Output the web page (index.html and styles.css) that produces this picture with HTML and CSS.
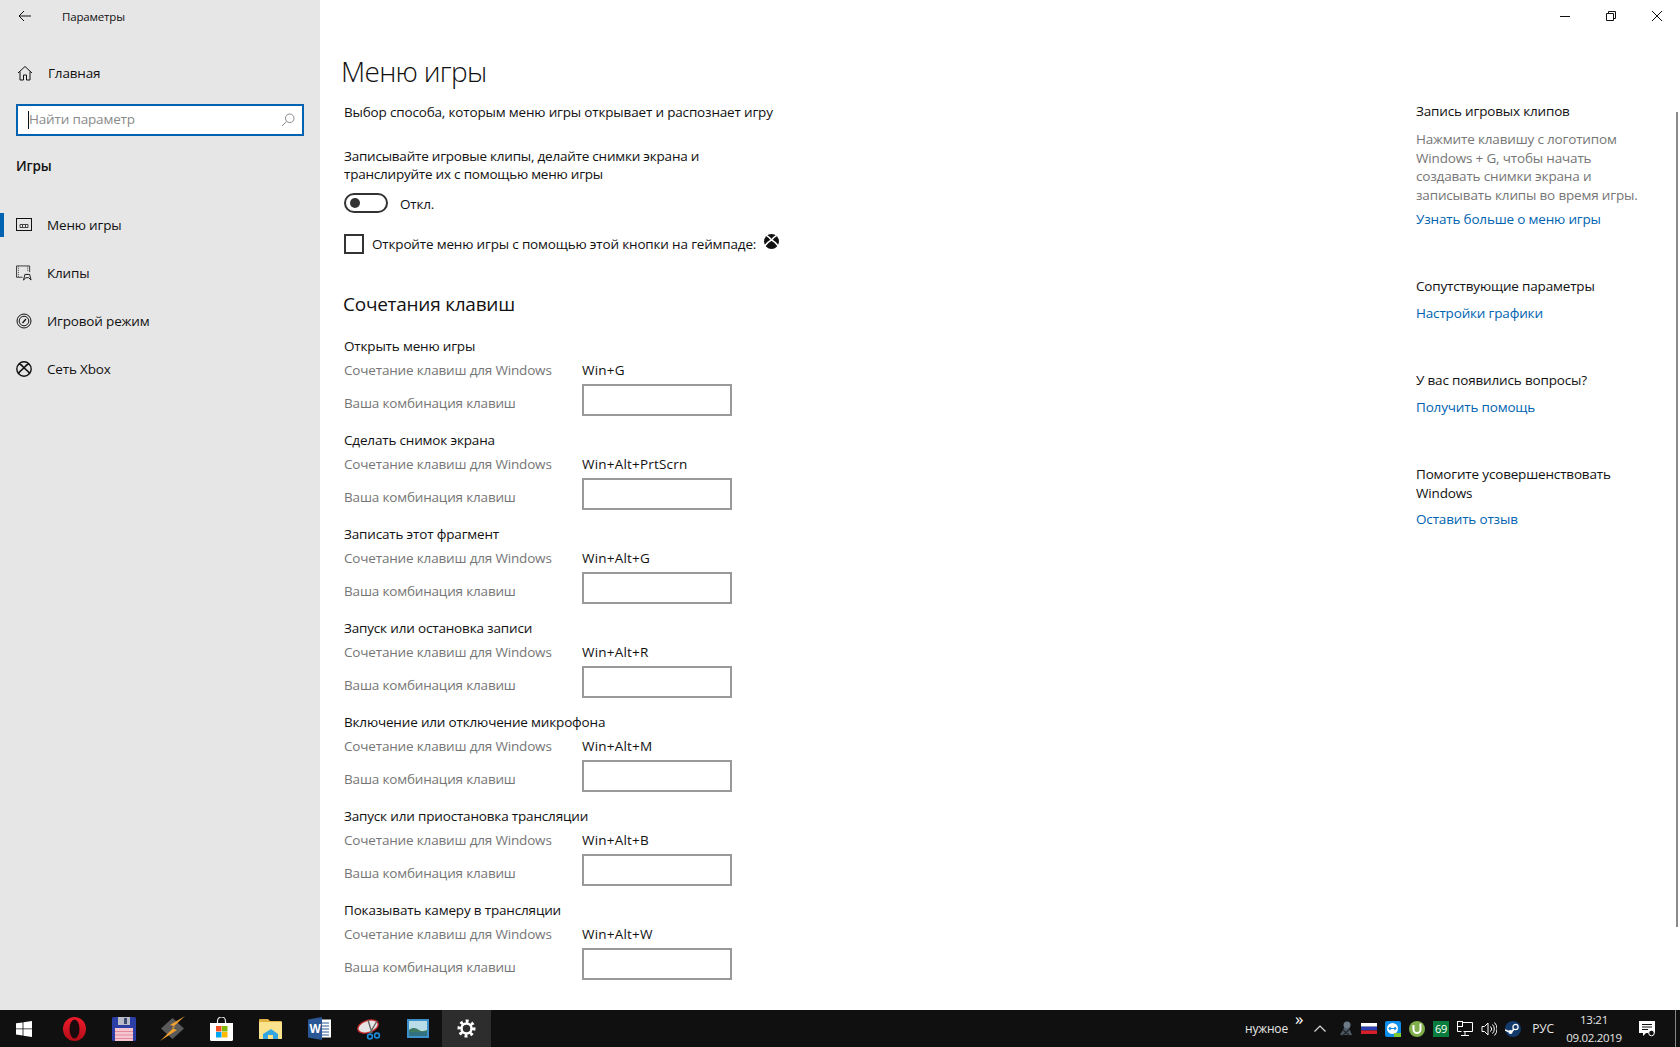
FILE: index.html
```html
<!DOCTYPE html>
<html lang="ru">
<head>
<meta charset="utf-8">
<title>Параметры</title>
<link rel="stylesheet" href="styles.css">
</head>
<body>
<div class="window">
  <aside class="sidebar">
    <div class="titlebar">
      <svg class="back" width="14" height="12" viewBox="0 0 14 12"><path d="M13 6H1M6 1 1 6l5 5" fill="none" stroke="#111" stroke-width="1"/></svg>
      <span class="apptitle">Параметры</span>
    </div>
    <div class="home">
      <svg width="16" height="16" viewBox="0 0 16 16"><path d="M1 8 8 1.500 15 8M3 6.500V15h3.500v-5h3v5H13V6.500" fill="none" stroke="#111" stroke-width="1"/></svg>
      <span>Главная</span>
    </div>
    <div class="search">
      <span class="caret"></span><span class="placeholder">Найти параметр</span>
      <svg width="14" height="14" viewBox="0 0 14 14"><circle cx="8.700" cy="5.300" r="4.300" fill="none" stroke="#8a8a8a"/><path d="M5.600 8.400 1 13" stroke="#8a8a8a" fill="none"/></svg>
    </div>
    <div class="section">Игры</div>
    <nav class="nav">
      <div class="navitem active">
        <svg width="16" height="14" viewBox="0 0 16 14"><rect x=".5" y=".5" width="15" height="12" fill="none" stroke="#111"/><path d="M4 6.500h8v3H4z" fill="none" stroke="#444"/><path d="M6.500 7v2M9.500 7v2" stroke="#444"/></svg>
        <span>Меню игры</span>
      </div>
      <div class="navitem">
        <svg width="17" height="16" viewBox="0 0 17 16"><path d="M7 12.500H.5V.5h14V7" fill="none" stroke="#333"/><path d="M2.500 1v11M12.500 1v6" stroke="#333" stroke-dasharray="1 1"/><path d="M8 15.500l1.500-6h5l1.500 6-2.500-2.500h-3z" fill="none" stroke="#111"/></svg>
        <span>Клипы</span>
      </div>
      <div class="navitem">
        <svg width="16" height="16" viewBox="0 0 16 16"><circle cx="8" cy="8" r="7" fill="none" stroke="#111"/><circle cx="8" cy="8" r="4.800" fill="none" stroke="#111"/><path d="M6.500 10 10 6" stroke="#111" stroke-width="1.300"/></svg>
        <span>Игровой режим</span>
      </div>
      <div class="navitem">
        <svg width="16" height="16" viewBox="0 0 16 16"><circle cx="8" cy="8" r="7.200" fill="none" stroke="#111" stroke-width="1.400"/><path d="M2.800 2.500C5 3.500 7 5.500 8 6.800 9 5.500 11 3.500 13.200 2.500M2.200 12.800C3.600 10.200 6.300 8.200 8 6.800c1.700 1.400 4.400 3.400 5.800 6" fill="none" stroke="#111" stroke-width="1.500"/></svg>
        <span>Сеть Xbox</span>
      </div>
    </nav>
  </aside>

  <main class="main">
    <div class="controls">
      <svg width="10" height="10" viewBox="0 0 10 10"><path d="M0 5.500h10" stroke="#111"/></svg>
      <svg width="10" height="10" viewBox="0 0 10 10"><path d="M.5 2.500h7v7h-7zM2.500 2.500V.5h7v7h-2" fill="none" stroke="#111"/></svg>
      <svg width="10" height="10" viewBox="0 0 10 10"><path d="M0 0l10 10M10 0 0 10" stroke="#111" fill="none"/></svg>
    </div>
    <div class="scrollthumb"></div>
    <div class="page">
      <section class="content">
        <h1 class="title">Меню игры</h1>
        <p class="desc">Выбор способа, которым меню игры открывает и распознает игру</p>
        <p class="para">Записывайте игровые клипы, делайте снимки экрана и<br>транслируйте их с помощью меню игры</p>
        <div class="toggle-row"><span class="toggle"><span class="knob"></span></span><span class="toggle-text">Откл.</span></div>
        <div class="check-row">
          <span class="checkbox"></span>
          <span>Откройте меню игры с помощью этой кнопки на геймпаде:</span>
          <svg class="xbox" width="15" height="15" viewBox="0 0 16 16"><circle cx="8" cy="8" r="8" fill="#111"/><path d="M2.500 1.500C5 3 7 5 8 6.300 9 5 11 3 13.500 1.500M1 12.500C3 9.500 6 7.500 8 6.300c2 1.200 5 3.200 7 6.200" fill="none" stroke="#fff" stroke-width="1.700"/></svg>
        </div>
        <h2 class="subtitle">Сочетания клавиш</h2>

        <div class="group">
          <div class="gtitle">Открыть меню игры</div>
          <div class="row"><span class="muted">Сочетание клавиш для Windows</span><span class="keyval">Win+G</span></div>
          <div class="row"><span class="muted label">Ваша комбинация клавиш</span><span class="keybox"></span></div>
        </div>
        <div class="group">
          <div class="gtitle">Сделать снимок экрана</div>
          <div class="row"><span class="muted">Сочетание клавиш для Windows</span><span class="keyval">Win+Alt+PrtScrn</span></div>
          <div class="row"><span class="muted label">Ваша комбинация клавиш</span><span class="keybox"></span></div>
        </div>
        <div class="group">
          <div class="gtitle">Записать этот фрагмент</div>
          <div class="row"><span class="muted">Сочетание клавиш для Windows</span><span class="keyval">Win+Alt+G</span></div>
          <div class="row"><span class="muted label">Ваша комбинация клавиш</span><span class="keybox"></span></div>
        </div>
        <div class="group">
          <div class="gtitle">Запуск или остановка записи</div>
          <div class="row"><span class="muted">Сочетание клавиш для Windows</span><span class="keyval">Win+Alt+R</span></div>
          <div class="row"><span class="muted label">Ваша комбинация клавиш</span><span class="keybox"></span></div>
        </div>
        <div class="group">
          <div class="gtitle">Включение или отключение микрофона</div>
          <div class="row"><span class="muted">Сочетание клавиш для Windows</span><span class="keyval">Win+Alt+M</span></div>
          <div class="row"><span class="muted label">Ваша комбинация клавиш</span><span class="keybox"></span></div>
        </div>
        <div class="group">
          <div class="gtitle">Запуск или приостановка трансляции</div>
          <div class="row"><span class="muted">Сочетание клавиш для Windows</span><span class="keyval">Win+Alt+B</span></div>
          <div class="row"><span class="muted label">Ваша комбинация клавиш</span><span class="keybox"></span></div>
        </div>
        <div class="group">
          <div class="gtitle">Показывать камеру в трансляции</div>
          <div class="row"><span class="muted">Сочетание клавиш для Windows</span><span class="keyval">Win+Alt+W</span></div>
          <div class="row"><span class="muted label">Ваша комбинация клавиш</span><span class="keybox"></span></div>
        </div>
      </section>

      <aside class="related">
        <div class="block">
          <div>Запись игровых клипов</div>
          <div class="muted note">Нажмите клавишу с логотипом<br>Windows + G, чтобы начать<br>создавать снимки экрана и<br>записывать клипы во время игры.</div>
          <a class="link after-note">Узнать больше о меню игры</a>
        </div>
        <div class="block">
          <div>Сопутствующие параметры</div>
          <a class="link">Настройки графики</a>
        </div>
        <div class="block">
          <div>У вас появились вопросы?</div>
          <a class="link">Получить помощь</a>
        </div>
        <div class="block">
          <div>Помогите усовершенствовать<br>Windows</div>
          <a class="link">Оставить отзыв</a>
        </div>
      </aside>
    </div>
  </main>
</div>

<footer class="taskbar">
  <div class="tb start">
    <svg width="16" height="16" viewBox="0 0 16 16"><path d="M0 2.300 6.600 1.400V7.500H0zM7.400 1.300 16 0V7.500H7.400zM0 8.300H6.600V14.500L0 13.600zM7.400 8.300H16V16L7.400 14.700z" fill="#fff"/></svg>
  </div>
  <div class="tb">
    <svg width="23" height="24" viewBox="0 0 23 24"><defs><linearGradient id="op" x1="0" y1="0" x2="0" y2="1"><stop offset="0" stop-color="#f01b2a"/><stop offset="1" stop-color="#b30d18"/></linearGradient></defs><ellipse cx="11.500" cy="12" rx="11.500" ry="12" fill="url(#op)"/><ellipse cx="11.500" cy="12" rx="5" ry="9.500" fill="#1a0c0e"/></svg>
  </div>
  <div class="tb">
    <svg width="24" height="24" viewBox="0 0 24 24"><rect width="24" height="24" rx="1.500" fill="#2b3fa6"/><rect x="6" y="0" width="12" height="8" fill="#b9bcc8"/><rect x="12" y="1" width="3" height="6" fill="#3c4a70"/><rect x="3" y="11" width="18" height="13" fill="#f5c6cf"/><path d="M3 14.500h18M3 18h18M3 21.500h18" stroke="#e58a9c"/></svg>
  </div>
  <div class="tb">
    <svg width="25" height="25" viewBox="0 0 25 25"><path d="M12.500 2 24 12.500 12.500 23 1 12.500z" fill="#5a5a5a"/><path d="M25 0 10 9l5 1.500L0 25l17-11-5-2z" fill="#f0a030"/></svg>
  </div>
  <div class="tb">
    <svg width="23" height="24" viewBox="0 0 23 24"><path d="M7.500 6V4a4 4 0 0 1 8 0v2" fill="none" stroke="#eee" stroke-width="1.200"/><path d="M0 6h23v16.500a1.500 1.500 0 0 1-1.500 1.500h-20A1.500 1.500 0 0 1 0 22.500z" fill="#fff"/><rect x="6" y="9" width="5.500" height="5.500" fill="#f25022"/><rect x="12" y="9" width="5.500" height="5.500" fill="#7fba00"/><rect x="6" y="15" width="5.500" height="5.500" fill="#00a4ef"/><rect x="12" y="15" width="5.500" height="5.500" fill="#ffb900"/></svg>
  </div>
  <div class="tb">
    <svg width="23" height="20" viewBox="0 0 23 20"><path d="M0 1a1 1 0 0 1 1-1h8l2 2h11a1 1 0 0 1 1 1v16a1 1 0 0 1-1 1H1a1 1 0 0 1-1-1z" fill="#e0b040"/><rect x="0" y="3" width="23" height="17" rx="1" fill="#fbe38e"/><path d="M4 20v-5l8-5 7 5v5z" fill="#35a5e0"/><rect x="9" y="16" width="5" height="4" fill="#fbe38e"/></svg>
  </div>
  <div class="tb">
    <svg width="23" height="23" viewBox="0 0 23 23"><rect x="9" y="2.500" width="14" height="18" fill="#fff"/><path d="M14 6h7M14 9h7M14 12h7M14 15h7M14 18h7" stroke="#2b5797"/><path d="M0 2.500 14 0v23L0 20.500z" fill="#2b5797"/><text x="7" y="15.500" class="wordw">W</text></svg>
  </div>
  <div class="tb">
    <svg width="24" height="24" viewBox="0 0 24 24"><ellipse cx="11" cy="9.500" rx="10.500" ry="6" fill="#e4e4e4" stroke="#c8282a" stroke-width="1.400" transform="rotate(-18 11 9.500)"/><path d="M11 3l4 13M20 4 13 16" stroke="#666" stroke-width="1.400"/><circle cx="13" cy="19.500" r="2.400" fill="none" stroke="#1c8ad8" stroke-width="1.600"/><circle cx="20" cy="18.500" r="2.400" fill="none" stroke="#1c8ad8" stroke-width="1.600"/></svg>
  </div>
  <div class="tb">
    <svg width="22" height="19" viewBox="0 0 22 19"><rect width="22" height="19" fill="#3d8fc9"/><rect x="2" y="2" width="18" height="15" fill="#b8dce8"/><path d="M2 17v-6c4-3 7-2 10 0s5 1 8 0v6z" fill="#3f7a64"/><path d="M2 13h18v4H2z" fill="#2d6d8a" opacity=".7"/></svg>
  </div>
  <div class="tb current">
    <svg width="19" height="19" viewBox="0 0 19 19"><circle cx="9.500" cy="9.500" r="7" fill="none" stroke="#fff" stroke-width="4" stroke-dasharray="2.700 2.800" transform="rotate(-8 9.500 9.500)"/><circle cx="9.500" cy="9.500" r="5" fill="none" stroke="#fff" stroke-width="2.500"/></svg>
  </div>

  <div class="tray">
    <span class="toolbar">нужное</span>
    <span class="more">»</span>
    <svg class="chev" width="12" height="7" viewBox="0 0 12 7"><path d="M.5 6.500 6 1l5.500 5.500" fill="none" stroke="#ddd" stroke-width="1.200"/></svg>
    <span class="ti">
      <svg width="15" height="15" viewBox="0 0 15 15"><circle cx="9" cy="4" r="3.500" fill="#6c7a88"/><path d="M2 14l4-7h5l3 7z" fill="#4e5c6a"/><path d="M5 9l7 6M12 8l-8 7" stroke="#222" stroke-width="1.200"/></svg>
    </span>
    <span class="ti">
      <svg width="16" height="11" viewBox="0 0 16 11"><rect width="16" height="3.700" fill="#fff"/><rect y="3.700" width="16" height="3.700" fill="#2a3fb0"/><rect y="7.400" width="16" height="3.600" fill="#d5202a"/></svg>
    </span>
    <span class="ti">
      <svg width="16" height="16" viewBox="0 0 16 16"><rect width="16" height="16" rx="2" fill="#0e8ee9"/><circle cx="7.500" cy="7.500" r="5.500" fill="#fff"/><path d="M4 7.500h7M5.500 6 4 7.500 5.500 9M9.500 6 11 7.500 9.500 9" fill="none" stroke="#0e8ee9" stroke-width="1.100"/><rect x="9" y="12" width="7" height="4" fill="#7ec832"/></svg>
    </span>
    <span class="ti">
      <svg width="16" height="16" viewBox="0 0 16 16"><circle cx="8" cy="8" r="8" fill="#7fae4a"/><path d="M4.500 4v4.500a3.500 3.500 0 0 0 7 0V2.500" fill="none" stroke="#fff" stroke-width="2"/></svg>
    </span>
    <span class="ti"><span class="badge69">69</span></span>
    <span class="ti">
      <svg width="16" height="16" viewBox="0 0 16 16"><path d="M4.500 1.500h11v9h-9M8 10.500v3.500M4 14.500h8" fill="none" stroke="#fff"/><rect x=".5" y=".5" width="5" height="5" fill="#101010" stroke="#fff"/><path d="M.5 5.500v5h4" fill="none" stroke="#fff"/></svg>
    </span>
    <span class="ti">
      <svg width="16" height="16" viewBox="0 0 16 16"><path d="M1 5.500h2.500L7 2v12l-3.500-3.500H1z" fill="none" stroke="#fff"/><path d="M9.500 5.500a3.500 3.500 0 0 1 0 5M11.500 3.500a6.500 6.500 0 0 1 0 9M13.500 1.500a9.500 9.500 0 0 1 0 13" fill="none" stroke="#fff"/></svg>
    </span>
    <span class="ti">
      <svg width="16" height="16" viewBox="0 0 16 16"><circle cx="8" cy="8" r="8" fill="#123a6b"/><circle cx="10.500" cy="6" r="2.600" fill="none" stroke="#fff" stroke-width="1.200"/><path d="M0 9l6 2.500L9 8" fill="none" stroke="#fff" stroke-width="1.600"/><circle cx="5.500" cy="11" r="2" fill="#fff"/></svg>
    </span>
    <span class="lang">РУС</span>
    <span class="clock"><span>13:21</span><span>09.02.2019</span></span>
    <svg class="notify" width="16" height="16" viewBox="0 0 16 16"><path d="M0 0h16v12H7l-3 3v-3H0z" fill="#fff"/><path d="M3 3.500h10M3 6h10M3 8.500h6" stroke="#101010"/><circle cx="12.500" cy="12" r="2.800" fill="#101010" stroke="#fff"/></svg>
    <span class="desktop"></span>
  </div>
</footer>
</body>
</html>
```
FILE: styles.css
```css
* { box-sizing: border-box; }
html, body { margin: 0; height: 100%; }
body {
  width: 1680px;
  height: 1047px;
  display: flex;
  flex-direction: column;
  overflow: hidden;
  font-family: "Open Sans", "Noto Sans", "Liberation Sans", sans-serif;
  font-size: 13.5px;
  letter-spacing: -0.17px;
  color: #111;
  background: #fff;
}
svg { display: block; flex: none; }

.window { flex: 1; display: flex; min-height: 0; }

/* Sidebar */
.sidebar { width: 320px; flex: none; background: #e6e6e6; }
.titlebar { height: 32px; display: flex; align-items: center; padding-left: 18px; }
.apptitle { margin-left: 30px; font-size: 11.5px; }
.home { height: 30px; margin-top: 26px; display: flex; align-items: center; padding-left: 17px; gap: 15px; }
.search {
  margin: 16px 16px 0;
  height: 32px;
  border: 2px solid #0063b1;
  background: #fff;
  display: flex;
  align-items: center;
  padding-left: 10px;
  padding-right: 7px;
}
.caret { width: 1px; height: 18px; background: #111; }
.placeholder { flex: 1; color: #8a8a8a; padding-bottom: 2px; }
.section { margin: 20px 0 0 16px; height: 20px; line-height: 20px; font-weight: 600; }
.nav { margin-top: 25px; }
.navitem { height: 48px; display: flex; align-items: center; padding-left: 16px; position: relative; }
.navitem svg { width: 16px; margin-right: 15px; }
.navitem.active::before {
  content: "";
  position: absolute;
  left: 0;
  top: 12px;
  width: 4px;
  height: 24px;
  background: #0063b1;
}

/* Main */
.main { flex: 1; position: relative; min-width: 0; }
.controls { height: 32px; display: flex; justify-content: flex-end; align-items: center; gap: 36px; padding-right: 18px; }
.scrollthumb { position: absolute; right: 2px; top: 112px; width: 2px; height: 815px; background: #8a8a8a; }
.page { display: flex; }
.content { width: 1096px; padding-left: 24px; flex: none; }
.title { margin: 19px 0 0 -3px; font-size: 28px; font-weight: 300; line-height: 40px; letter-spacing: -0.7px; }
.desc { margin: 11px 0 0; line-height: 20px; }
.para { margin: 25px 0 0; line-height: 18px; letter-spacing: -0.22px; }
.toggle-row { margin-top: 10px; height: 20px; display: flex; align-items: center; gap: 12px; }
.toggle { width: 44px; height: 20px; border: 2px solid #333; border-radius: 10px; display: flex; align-items: center; padding-left: 4px; }
.knob { width: 10px; height: 10px; border-radius: 50%; background: #333; }
.toggle-text { margin-top: 2px; }
.check-row { margin-top: 21px; height: 20px; display: flex; align-items: center; }
.checkbox { width: 20px; height: 20px; border: 2px solid #333; margin-right: 8px; flex: none; }
.xbox { margin: -5px 0 0 8px; }
.subtitle { margin: 36px 0 18px -1px; font-size: 19px; font-weight: 400; line-height: 28px; letter-spacing: -0.25px; }
.group { margin-bottom: 14px; }
.gtitle { line-height: 20px; }
.row { display: grid; grid-template-columns: 238px 150px; line-height: 20px; margin-top: 4px; }
.muted { color: #767676; }
.keyval { letter-spacing: 0.2px; }
.label { margin-top: 9px; }
.keybox { width: 150px; height: 32px; border: 2px solid #999; }

.related { padding-top: 70px; width: 240px; }
.block { line-height: 18.5px; margin-bottom: 49px; }
.note { margin-top: 9.5px; }
.link { display: block; color: #0063b1; margin-top: 8px; }
.link.after-note { margin-top: 5.5px; }

/* Taskbar */
.taskbar { height: 37px; flex: none; background: #101010; display: flex; color: #e6e6e6; }
.tb { width: 49px; display: flex; align-items: center; justify-content: center; }
.tb.start { width: 50px; padding-right: 2px; }
.tb.current { background: #2d2d2d; }
.wordw { font-family: "Liberation Sans", sans-serif; font-size: 12px; font-weight: 700; fill: #fff; text-anchor: middle; }
.tray { margin-left: auto; display: flex; align-items: center; position: relative; }
.toolbar { font-size: 12px; width: 50px; }
.more { width: 19px; font-size: 17px; line-height: 15px; align-self: flex-start; margin-top: 1px; color: #fff; }
.chev { margin-right: 7px; }
.ti { width: 24px; display: flex; justify-content: center; }
.badge69 { width: 16px; height: 16px; background: #0a7d3e; color: #fff; font-size: 11px; line-height: 16px; text-align: center; }
.lang { width: 36px; font-size: 12px; text-align: center; }
.clock { width: 66px; display: flex; flex-direction: column; align-items: center; font-size: 11.5px; letter-spacing: -0.3px; line-height: 18px; }
.notify { margin-left: 12px; margin-right: 25px; }
.desktop { width: 1px; height: 37px; background: #888; position: absolute; right: 4px; top: 0; }
```
